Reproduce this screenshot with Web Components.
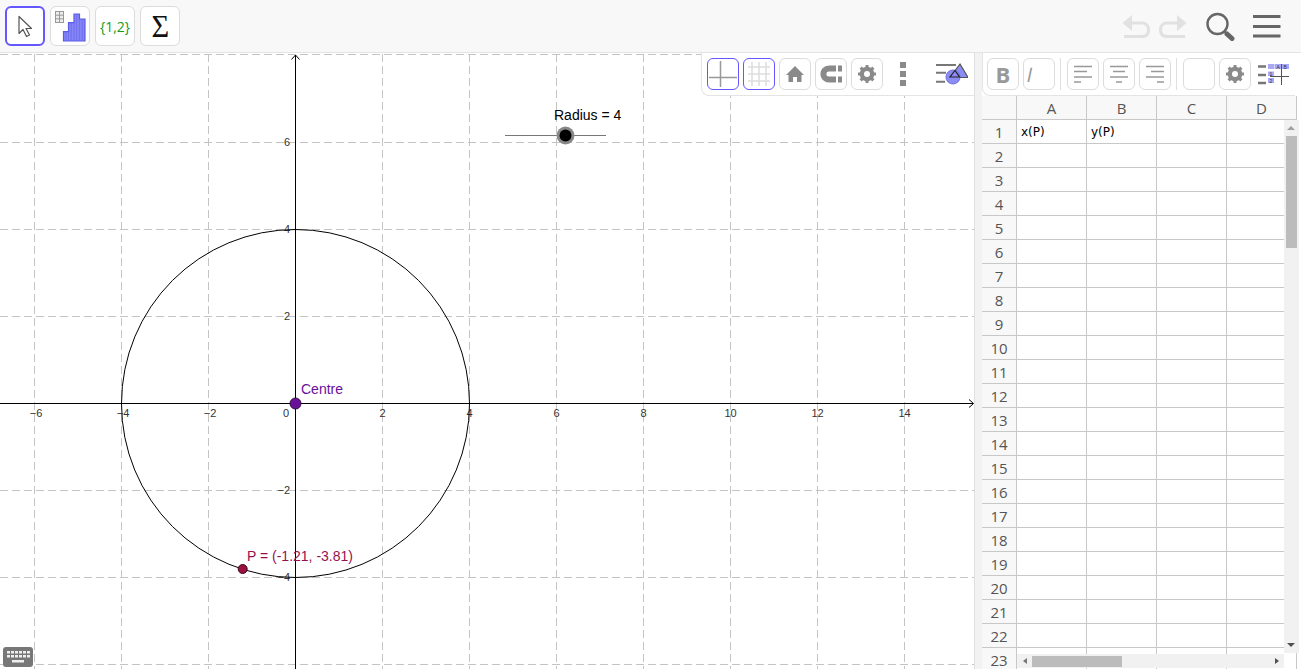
<!DOCTYPE html>
<html lang="en"><head><meta charset="utf-8"><title>GeoGebra</title>
<style>html,body{margin:0;padding:0;height:100%;overflow:hidden;background:#fff;font-family:"Liberation Sans",sans-serif}</style>
</head><body>
<geo-app></geo-app>
<script>
const el=(name,html)=>{customElements.define(name,class extends HTMLElement{constructor(){super();this.attachShadow({mode:'open'}).innerHTML=typeof html==='function'?html(this):html}})};
const gear=`<svg width="22" height="22" viewBox="0 0 22 22"><circle cx="11" cy="11" r="5.500" fill="none" stroke="#8a8a8a" stroke-width="3.600"/><path d="M11 2V20M2 11H20M4.600 4.600L17.400 17.400M17.400 4.600L4.600 17.400" stroke="#8a8a8a" stroke-width="3"/><circle cx="11" cy="11" r="3" fill="#fff"/></svg>`;

el('tool-btn',`<style>:host{display:flex;box-sizing:border-box;align-items:center;justify-content:center;width:var(--w,40px);height:var(--h,40px);border:1px solid #dcdcdc;border-radius:6px;background:#fff;flex:none}
:host([active]){border:2px solid #6557ff;}
:host([sel]){border:1px solid #6557ff;}</style><slot></slot>`);

el('top-bar',`<style>:host{display:flex;box-sizing:border-box;height:53px;width:100%;align-items:flex-start;background:#f8f8f8;border-bottom:1px solid #e4e4e4;padding:6px 0 0 5px;gap:5px;flex:none}
.r{margin-left:auto;display:flex;align-items:center;height:40px;padding-right:20px}
.sig{font:32px "Liberation Serif",serif;color:#111;line-height:1;display:inline-block;transform:scaleX(.95)}
.lst{font:14px "Open Sans",sans-serif;color:#1a9a1a;white-space:nowrap}</style>
<tool-btn active><svg width="22" height="26" viewBox="0 0 22 26"><path d="M5 3.500V20.500L9 16.500L12.500 23.500L15.500 22L12 15.500H17.500Z" fill="#fff" stroke="#555" stroke-width="1.200" stroke-linejoin="round"/></svg></tool-btn>
<tool-btn><svg width="38" height="38" viewBox="0 0 38 38"><g fill="#eee" stroke="#999"><rect x="4.500" y="4.500" width="8" height="11"/><path d="M4.500 8.200h8M4.500 11.800h8M8.500 4.500v11" fill="none"/></g><path d="M12.500 34V24.700H17.500V15.700H23V7H28.500V12H34V34Z" fill="#8585f7" stroke="#5a5ae8" stroke-width="1.200"/><path d="M15 24.700V34M17.500 24.700V34M20.200 15.700V34M23 15.700V34M25.700 7V34M28.500 12V34M31.200 12V34" stroke="#6a6aec" stroke-width=".8"/></svg></tool-btn>
<tool-btn><span class="lst">{1,2}</span></tool-btn>
<tool-btn><span class="sig">Σ</span></tool-btn>
<div class="r">
<svg width="28" height="24" viewBox="0 0 28 24" fill="none"><path d="M8 9H20C25 9 26.500 13 26.500 16C26.500 20 24 22.500 20 22.500H2" stroke="#e1e1e1" stroke-width="3.200"/><path d="M0.500 9L10 1V17Z" fill="#e1e1e1"/></svg>
<svg width="28" height="24" viewBox="0 0 28 24" fill="none" style="margin-left:9px"><path d="M20 9H8C3 9 1.500 13 1.500 16C1.500 20 4 22.500 8 22.500H26" stroke="#e1e1e1" stroke-width="3.200"/><path d="M27.500 9L18 1V17Z" fill="#e1e1e1"/></svg>
<svg width="30" height="30" viewBox="0 0 30 30" style="margin-left:19px"><circle cx="11.500" cy="13" r="10" fill="none" stroke="#666" stroke-width="2.400"/><path d="M18.500 20.500L21 23" stroke="#666" stroke-width="2"/><path d="M21 23L26 27.500" stroke="#666" stroke-width="5" stroke-linecap="round"/></svg>
<svg width="28" height="24" viewBox="0 0 28 24" style="margin-left:17px"><path d="M0 2.500H27.500M0 12.500H27.500M0 22H27.500" stroke="#666" stroke-width="3.200"/></svg>
</div>`);

el('style-bar',`<style>:host{position:absolute;top:0;right:0;display:flex;box-sizing:border-box;height:43px;width:273px;align-items:flex-start;gap:4px;padding:5px 0 0 5px;background:#fff;border:1px solid #e4e4e4;border-width:0 0 1px 1px;border-radius:0 0 0 8px}
tool-btn{--w:32px;--h:32px}.more{width:32px;height:32px;display:flex;justify-content:center;align-items:center}</style>
<tool-btn sel><svg width="30" height="30" viewBox="0 0 30 30"><path d="M12.500 2V28M1 18.500H29" stroke="#999" stroke-width="1.500"/></svg></tool-btn>
<tool-btn sel><svg width="30" height="30" viewBox="0 0 30 30" stroke="#ddd" stroke-width="1.500"><path d="M4 8H26M4 15H26M4 22H26M8 3V27M15 3V27M22 3V27"/></svg></tool-btn>
<tool-btn><svg width="22" height="20" viewBox="0 0 22 20"><path d="M11 2L20 11H17.500V18H13V13H9V18H4.500V11H2Z" fill="#8a8a8a"/></svg></tool-btn>
<tool-btn><svg width="28" height="20" viewBox="0 0 28 20" fill="none"><path d="M19 4.500H12C4.500 4.500 4.500 15.500 12 15.500H19" stroke="#8a8a8a" stroke-width="6"/><path d="M21 1.500h4v6h-4zM21 12.500h4v6h-4z" fill="#8a8a8a"/></svg></tool-btn>
<tool-btn>${gear}</tool-btn>
<div class="more"><svg width="6" height="24" viewBox="0 0 6 24" fill="#8a8a8a"><path d="M0 0h6v6H0zM0 9h6v6H0zM0 18h6v6H0z"/></svg></div>
<svg width="32" height="24" viewBox="0 0 32 24" style="margin:4px 0 0 13px"><path d="M0 3H20M0 10.700H10M0 19.700H9" stroke="#777" stroke-width="2" fill="none"/><path d="M24 2L32 15.500H14Z" fill="#8c8cf5" stroke="#555" stroke-width="1.200"/><circle cx="17" cy="15" r="7" fill="#8c8cf5" stroke="#6e6ee0"/><path d="M19 8.500L23.500 15H14Z" fill="none" stroke="#222" stroke-width="1.200"/></svg>`);

el('graphics-view',()=>{
 const X=v=>295.5+43.5*v,Y=v=>403.5-43.5*v;let g='',t='';
 for(let v=-6;v<=14;v+=2){if(!v)continue;g+=`<path d="M${X(v)} 54V724"/>`;t+=`<text x="${X(v)+(v<0?1.5:0)}" y="417" text-anchor="middle">${v<0?'−'+(-v):v}</text>`}
 for(let v=-4;v<=6;v+=2){if(!v)continue;t+=`<text x="290" y="${Y(v)+3}" text-anchor="end">${v<0?'−'+(-v):v}</text>`}
 for(let v=-6;v<=6;v+=2){if(!v)continue;g+=`<path d="M0 ${Y(v)}H974"/>`}
 g+=`<path d="M0 54.500H974"/>`;
 return `<style>:host{display:block;position:relative;width:974px;flex:none;overflow:hidden;background:#fff}
 svg.c{display:block;position:absolute;left:0;top:-53px}
 text{font-family:"Liberation Sans",sans-serif}.n text{font-size:11px;fill:#333}
 .kb{position:absolute;left:3px;bottom:2px;display:block}</style>
 <svg class="c" width="974" height="724" viewBox="0 0 974 724">
 <g fill="none" stroke="#c4c4c4" stroke-dasharray="8 4">${g}</g>
 <g stroke="#000" fill="none"><path d="M0 403.500H973M295.500 55V724"/><path d="M969 399.500L973.500 403.500L969 407.500M291.500 59.500L295.500 55L299.500 59.500"/></g>
 <g class="n">${t}<text x="289" y="417" text-anchor="end">0</text></g>
 <circle cx="295.500" cy="403.500" r="174" fill="none" stroke="#000" stroke-width="1"/>
 <path d="M505 135.500H606" stroke="#777"/>
 <circle cx="565.500" cy="135.500" r="9" fill="#888"/><circle cx="565.500" cy="135.500" r="6" fill="#000"/>
 <text x="554" y="120" font-size="14" fill="#000">Radius = 4</text>
 <circle cx="295.500" cy="403.500" r="5.500" fill="#6a0f9a" stroke="#2c1040"/>
 <text x="301" y="394" font-size="14" fill="#6a0f9a">Centre</text>
 <circle cx="242.700" cy="569" r="4.500" fill="#9b1040" stroke="#3a0a1e"/>
 <text x="247" y="561" font-size="14" fill="#96104e">P = (-1.21, -3.81)</text>
 </svg>
 <style-bar></style-bar>
 <svg class="kb" width="30" height="20" viewBox="0 0 30 20"><rect width="30" height="20" rx="3" fill="#777"/><g fill="#eee"><path d="M4 4h3v2.500H4zM8 4h3v2.500H8zM12 4h3v2.500h-3zM16 4h3v2.500h-3zM20 4h3v2.500h-3zM24 4h3v2.500h-3zM4 8h3v2.500H4zM8 8h3v2.500H8zM12 8h3v2.500h-3zM16 8h3v2.500h-3zM20 8h3v2.500h-3zM24 8h3v2.500h-3zM9 13h12v2.500H9z"/></g></svg>`;
});

el('sheet-bar',`<style>:host{display:flex;box-sizing:border-box;height:43px;flex:none;align-items:flex-start;gap:4px;padding:5px 0 0 4px;margin-right:4px;background:#fff;border-bottom:1px solid #e4e4e4;border-left:1px solid #e4e4e4;border-radius:0 0 0 8px}
tool-btn{--w:32px;--h:32px}.b{font:bold 22px "Open Sans",sans-serif;color:#999}.i{font:20px "Open Sans",sans-serif;color:#999;padding-right:18px;display:inline-block;transform:skewX(-12deg)}
.s{width:1px;height:32px;background:#e0e0e0;margin:0 2px 0 1px;flex:none}</style>
<tool-btn><span class="b">B</span></tool-btn><tool-btn><span class="i">I</span></tool-btn><span class="s"></span>
<tool-btn><svg width="18" height="18" viewBox="0 0 18 18" stroke="#999" stroke-width="1.300"><path d="M0 1.500H18M0 6.500H13M0 12H18M0 17H7"/></svg></tool-btn>
<tool-btn><svg width="18" height="18" viewBox="0 0 18 18" stroke="#999" stroke-width="1.300"><path d="M0 1.500H18M3 6.500H15M0 12H18M6 17H12"/></svg></tool-btn>
<tool-btn><svg width="18" height="18" viewBox="0 0 18 18" stroke="#999" stroke-width="1.300"><path d="M0 1.500H18M5 6.500H18M0 12H18M11 17H18"/></svg></tool-btn><span class="s"></span>
<tool-btn></tool-btn>
<tool-btn>${gear}</tool-btn>
<svg width="32" height="21" viewBox="0 0 32 21" style="margin:6px 0 0 3px;flex:none"><path d="M0 2.500H8M0 11H8M0 19H8" stroke="#777" stroke-width="2.500"/><g fill="#a9a9f5"><rect x="10" y="0" width="6.500" height="5"/><rect x="17" y="0" width="6.500" height="5"/><rect x="24" y="0" width="7" height="5"/><rect x="10" y="7.500" width="6" height="4.500"/><rect x="10" y="14" width="6" height="5"/></g><g font-size="5" font-family="Liberation Sans" fill="#334"><text x="18.500" y="4.500">A</text><text x="25.500" y="4.500">B</text><text x="11.500" y="11.700">1</text><text x="11.500" y="18.500">2</text></g><path d="M12 12.500H31M23.500 0V21" stroke="#555"/></svg>`);

el('sheet-scroll',(h)=>h.getAttribute('dir')==='h'?
`<style>:host{position:absolute;left:35px;right:15px;bottom:1px;height:14px;background:#f1f1f1;display:block}
.t{position:absolute;left:15px;top:2px;width:90px;height:11px;background:#bcbcbc}
.a{position:absolute;top:4px;width:0;height:0;border:3.500px solid transparent;border-width:3.500px 4px}
.l{border-right-color:#777;left:2px}.r{border-left-color:#505050;right:1px}</style><i class="a l"></i><i class="t"></i><i class="a r"></i>`
:`<style>:host{position:absolute;right:0;top:24px;bottom:16px;width:15px;background:#f1f1f1;display:block}
.t{position:absolute;left:2px;right:2px;top:16px;height:112px;background:#bcbcbc}
.a{position:absolute;left:3px;width:0;height:0;border:4px solid transparent;border-width:4px 4.500px}
.u{top:2px;border-bottom-color:#a0a0a0}.d{bottom:2px;border-top-color:#505050}</style><i class="a u"></i><i class="t"></i><i class="a d"></i>`);

el('spread-sheet',()=>{
 let c='<div class="h c0"></div>';
 for(const l of 'ABCD')c+=`<div class="h">${l}</div>`;
 for(let r=1;r<=23;r++){c+=`<div class="h c0">${r}</div>`;
  for(let k=0;k<4;k++)c+=`<div class="d">${r===1&&k===0?'x(P)':r===1&&k===1?'y(P)':''}</div>`}
 return `<style>:host{display:flex;flex-direction:column;flex:1;min-width:0;position:relative;overflow:hidden;background:#fff}
 .w{position:relative;flex:1;overflow:hidden;min-height:0}
 .g{display:grid;grid-template-columns:35px repeat(4,70px);grid-auto-rows:24px;width:max-content}
 .h,.d{box-sizing:border-box;border-right:1px solid #c8c8c8;border-bottom:1px solid #c8c8c8}
 .h{background:#f8f8f8;font:15px/24px "Open Sans",sans-serif;color:#555;text-align:center}
 .d{font:12px/24px "DejaVu Sans",sans-serif;color:#000;padding-left:4px;white-space:nowrap;background:#fff}
 </style><sheet-bar></sheet-bar><div class="w"><div class="g">${c}</div><sheet-scroll></sheet-scroll><sheet-scroll dir="h"></sheet-scroll></div>`;
});

el('geo-app',`<style>:host{display:flex;flex-direction:column;height:671px;width:1301px;overflow:hidden;background:#fff}
.m{display:flex;height:616px;width:1299px;flex:none;align-items:stretch}
.d{width:8px;flex:none;background:#f2f2f2;border-left:1px solid #e0e0e0;box-sizing:border-box}</style>
<top-bar></top-bar><div class="m"><graphics-view></graphics-view><div class="d"></div><spread-sheet></spread-sheet></div>`);
</script>
</body></html>
